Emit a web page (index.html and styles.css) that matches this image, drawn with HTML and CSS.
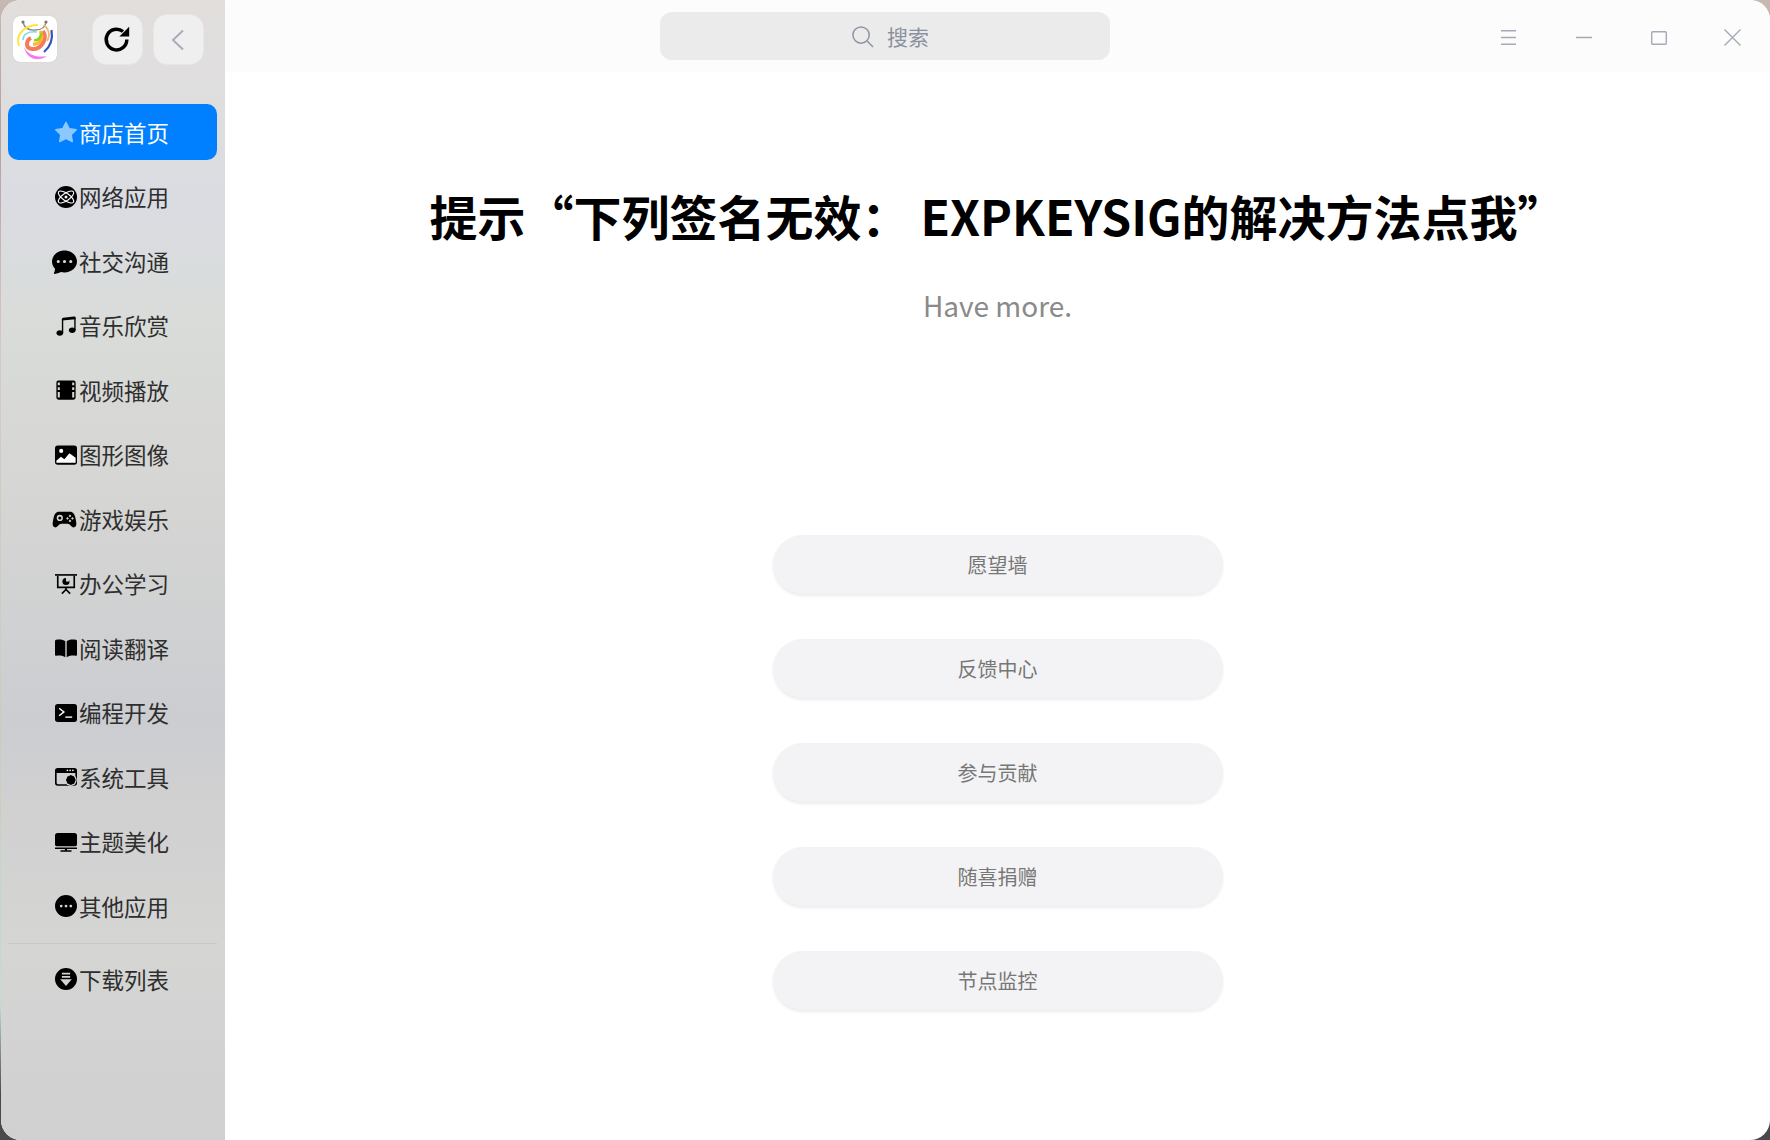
FILE: index.html
```html
<!DOCTYPE html>
<html lang="zh-CN">
<head>
<meta charset="utf-8">
<title>商店首页</title>
<link rel="stylesheet" href="styles.css">
</head>
<body>
<div class="window">
  <aside class="sidebar">
    <div class="side-top">
      <svg class="logo" viewBox="0 0 44 46">
        <rect width="44" height="46" rx="7" fill="#fff"/>
        <path d="M10 6 Q12 15 22 14 Q32 14 33 6" fill="none" stroke="#8a8a8a" stroke-width="1.400"/>
        <circle cx="10" cy="6" r="1.600" fill="#777"/><circle cx="33" cy="6" r="1.600" fill="#777"/>
        <path d="M6 30 C2 18 12 9 25 9" fill="none" stroke="#ffe23a" stroke-width="1.800"/>
        <path d="M10 24 C10 18 16 15 24 16" fill="none" stroke="#7fd8e8" stroke-width="1.600"/>
        <path d="M31 9 C37 14 37 21 34 25" fill="none" stroke="#f7b96a" stroke-width="1.800"/>
        <path d="M38.500 14 C40 23 37 31 31 36" fill="none" stroke="#2f52c8" stroke-width="2.200"/>
        <path d="M30 15 C35 23 28 34 19 33 C12 32 13 24 18 22" fill="none" stroke="#f47a5e" stroke-width="4"/>
        <path d="M27 15 C32 22 26 29 20 28" fill="none" stroke="#ffb52e" stroke-width="3"/>
        <path d="M28 17 C28 22 25 25 21 24" fill="none" stroke="#8fd01c" stroke-width="2.600"/>
        <path d="M11 31 C15 39 24 42 34 40 C25 46 14 44 11 31 Z" fill="#f47af0"/>
      </svg>
      <button class="tool-btn">
        <svg class="ico-refresh" viewBox="0 0 16 16"><path fill="none" stroke="#000" stroke-width="1.900" d="M13.700 8a5.700 5.700 0 1 1-2.100-4.400"/><path d="M9.600 6.400h5.400V1z" fill="#000"/></svg>
      </button>
      <button class="tool-btn">
        <svg class="ico-back" viewBox="0 0 14 22"><path fill="none" stroke="#a9adbb" stroke-width="2" d="M12 1.500 2 11l10 9.500"/></svg>
      </button>
    </div>
    <nav class="nav">
      <a class="nav-item active">
        <svg class="nav-ico" viewBox="0 0 16 16"><path d="M3.612 15.443c-.386.198-.824-.149-.746-.592l.83-4.730L.173 6.765c-.329-.314-.158-.888.283-.95l4.898-.696L7.538.792c.197-.39.73-.39.927 0l2.184 4.327 4.898.696c.441.062.612.636.282.95l-3.522 3.356.83 4.730c.078.443-.36.79-.746.592L8 13.187l-4.389 2.256z"/></svg>
        <span>商店首页</span>
      </a>
      <a class="nav-item">
        <svg class="nav-ico" viewBox="0 0 16 16"><circle cx="8" cy="8" r="8"/><g fill="none" stroke="#fff" stroke-width=".8"><ellipse cx="8" cy="8" rx="6.600" ry="2.600" transform="rotate(35 8 8)"/><ellipse cx="8" cy="8" rx="6.600" ry="2.600" transform="rotate(-35 8 8)"/></g><circle cx="8" cy="8" r="1.100" fill="#fff"/></svg>
        <span>网络应用</span>
      </a>
      <a class="nav-item">
        <svg class="nav-ico wide" viewBox="0 0 16 16"><path d="M16 8c0 3.866-3.582 7-8 7a9.060 9.060 0 0 1-2.347-.306c-.584.296-1.925.864-4.181 1.234-.2.032-.352-.176-.273-.362.354-.836.674-1.950.77-2.966C.744 11.370 0 9.760 0 8c0-3.866 3.582-7 8-7s8 3.134 8 7zM5 8a1 1 0 1 0-2 0 1 1 0 0 0 2 0zm4 0a1 1 0 1 0-2 0 1 1 0 0 0 2 0zm3 1a1 1 0 1 0 0-2 1 1 0 0 0 0 2z"/></svg>
        <span>社交沟通</span>
      </a>
      <a class="nav-item">
        <svg class="nav-ico" viewBox="0 0 16 16"><path d="M6 13c0 1.105-1.120 2-2.500 2S1 14.105 1 13c0-1.104 1.120-2 2.500-2s2.500.896 2.500 2zm9-2c0 1.105-1.120 2-2.500 2s-2.500-.895-2.500-2 1.120-2 2.500-2 2.500.895 2.500 2z"/><path d="M14 11V2h1v9h-1zM6 3v10H5V3h1z"/><path d="M5 2.905a1 1 0 0 1 .9-.995l8-.8a1 1 0 0 1 1.100.995V3L5 4V2.905z"/></svg>
        <span>音乐欣赏</span>
      </a>
      <a class="nav-item">
        <svg class="nav-ico" viewBox="0 0 16 16"><path fill-rule="evenodd" d="M2.500 1h11A1.500 1.500 0 0 1 15 2.500v11a1.500 1.500 0 0 1-1.500 1.500h-11A1.500 1.500 0 0 1 1 13.500v-11A1.500 1.500 0 0 1 2.500 1zM2 2.500v2h1.500v-2zm0 3.500v2h1.500V6zm0 3.500v2h1.500v-2zm0 3.200v.8h1.500v-2H2zM12.500 2.500v2H14v-2zm0 3.500v2H14V6zm0 3.500v2H14v-2zm0 3.500v.5H14v-2h-1.500z"/></svg>
        <span>视频播放</span>
      </a>
      <a class="nav-item">
        <svg class="nav-ico" viewBox="0 0 16 16"><rect y="1" width="16" height="14" rx="2"/><circle cx="4.500" cy="5" r="1.500" fill="#fff"/><path fill="#fff" d="M1 13.700v-1.500l3.300-3 2.500 1.800 3.700-4.200L15 10v3.700z"/></svg>
        <span>图形图像</span>
      </a>
      <a class="nav-item">
        <svg class="nav-ico wide" viewBox="0 0 16 16"><path fill-rule="evenodd" d="M4.500 3h7c2 0 3 1.500 3.500 4 .5 2.500 1.300 5.500-.8 6-1.700.4-2.400-2.300-4.200-2.300H6c-1.800 0-2.500 2.700-4.200 2.300C-.3 12.500.5 9.500 1 7c.5-2.500 1.500-4 3.500-4zM5 5a2 2 0 1 0 0 4 2 2 0 0 0 0-4zm0 1a1 1 0 1 1 0 2 1 1 0 0 1 0-2zm6.500-1.200-.9.900.9.900.9-.9zm-1.600 1.600-.9.900.9.900.9-.9zm3.200 0-.9.900.9.900.9-.9zM11.500 8l-.9.900.9.900.9-.9z"/></svg>
        <span>游戏娱乐</span>
      </a>
      <a class="nav-item">
        <svg class="nav-ico" viewBox="0 0 16 16"><path d="M0 .8h16V2H0z"/><path fill="none" stroke="#000" stroke-width="1.200" d="M2 2v8.500h12V2M8 10.500v2M8 12l-3 3M8 12l3 3"/><circle cx="8" cy="6.200" r="2.600"/><path fill="#d3d3d2" d="M8 6.200V3.600h2.600v2.600z"/></svg>
        <span>办公学习</span>
      </a>
      <a class="nav-item">
        <svg class="nav-ico" viewBox="0 0 16 16"><path d="M7.500 3C6 1.800 3.500 1.500.800 2 .4 2.100 0 2.400 0 2.900v10c0 .5.500.8 1 .7 2.500-.4 4.800-.1 6.500 1.100zM8.500 3c1.500-1.200 4-1.500 6.700-1 .4.100.8.400.8.900v10c0 .5-.5.800-1 .7-2.500-.4-4.800-.1-6.500 1.100z"/></svg>
        <span>阅读翻译</span>
      </a>
      <a class="nav-item">
        <svg class="nav-ico" viewBox="0 0 16 16"><rect y="1.500" width="16" height="13" rx="2"/><path fill="none" stroke="#fff" stroke-width="1" d="M3 4.500 6.500 7.200 3 10"/><path fill="none" stroke="#fff" stroke-width="1" d="M7.500 11h5"/></svg>
        <span>编程开发</span>
      </a>
      <a class="nav-item">
        <svg class="nav-ico" viewBox="0 0 16 16"><path fill="none" stroke="#000" stroke-width="1.200" d="M2 2.600h12a1.400 1.400 0 0 1 1.400 1.400v8.400a1.400 1.400 0 0 1-1.400 1.400H2a1.400 1.400 0 0 1-1.400-1.400V4A1.400 1.400 0 0 1 2 2.600z"/><path d="M2 1.500h12a2 2 0 0 1 2 2V5H0V3.500a2 2 0 0 1 2-2z"/><g fill="#fff"><circle cx="9" cy="3.200" r=".6"/><circle cx="11" cy="3.200" r=".6"/><circle cx="13" cy="3.200" r=".6"/></g><circle cx="11.500" cy="10.200" r="4.300" fill="#d2d2d2"/><circle cx="11.500" cy="10.200" r="2.300" fill="none" stroke="#000" stroke-width="1.900"/><path stroke="#000" stroke-width="1.200" d="M11.500 6.800v6.800M8.100 10.200h6.800M9.100 7.800l4.800 4.800M13.900 7.800l-4.800 4.800"/></svg>
        <span>系统工具</span>
      </a>
      <a class="nav-item">
        <svg class="nav-ico" viewBox="0 0 16 16"><path d="M2 1.500h12A2 2 0 0 1 16 3.500v6.300a1.200 1.200 0 0 1-1.200 1.200H1.200A1.200 1.200 0 0 1 0 9.800V3.500a2 2 0 0 1 2-2zM0 12h16v1.100H0zM7.200 13h1.600v1H12v1H4v-1h3.200z"/></svg>
        <span>主题美化</span>
      </a>
      <a class="nav-item">
        <svg class="nav-ico" viewBox="0 0 16 16"><path d="M16 8A8 8 0 1 1 0 8a8 8 0 0 1 16 0zM5.500 8a1 1 0 1 0-2 0 1 1 0 0 0 2 0zm3.500 0a1 1 0 1 0-2 0 1 1 0 0 0 2 0zm2.500 1a1 1 0 1 0 0-2 1 1 0 0 0 0 2z"/></svg>
        <span>其他应用</span>
      </a>
      <hr class="nav-sep">
      <a class="nav-item last">
        <svg class="nav-ico" viewBox="0 0 16 16"><path fill-rule="evenodd" d="M16 8A8 8 0 1 1 0 8a8 8 0 0 1 16 0zM5 3.500h6v1.200H5zM5 5.800h6V7H5zM5 8.200H3.800L8 13l4.200-4.800H5z"/></svg>
        <span>下载列表</span>
      </a>
    </nav>
  </aside>
  <main class="main">
    <header class="titlebar">
      <div class="search">
        <svg class="search-ico" viewBox="0 0 24 24"><circle cx="10.500" cy="10.500" r="8.500" fill="none" stroke="#8f95a6" stroke-width="1.600"/><path d="m16.500 16.500 6.500 6.500" fill="none" stroke="#8f95a6" stroke-width="1.600"/></svg>
        <span>搜索</span>
      </div>
      <div class="win-ctrls">
        <svg class="ctrl c-menu" viewBox="0 0 15 15"><path fill="none" stroke="#a5a9b8" stroke-width="1.500" d="M0 .8h15M0 7.500h15M0 14.300h15"/></svg>
        <svg class="ctrl c-min" viewBox="0 0 16 3"><path fill="none" stroke="#a5a9b8" stroke-width="1.500" d="M0 1.500h16"/></svg>
        <svg class="ctrl c-max" viewBox="0 0 16 14"><rect x=".7" y=".7" width="14.600" height="12.600" rx="1" fill="none" stroke="#a5a9b8" stroke-width="1.400"/></svg>
        <svg class="ctrl c-close" viewBox="0 0 17 17"><path fill="none" stroke="#a5a9b8" stroke-width="1.400" d="M.5.500l16 16M16.500.500l-16 16"/></svg>
      </div>
    </header>
    <section class="content">
      <h1 class="headline">提示“下列签名无效： EXPKEYSIG的解决方法点我”</h1>
      <p class="tagline">Have more.</p>
      <div class="links">
        <button class="pill">愿望墙</button>
        <button class="pill">反馈中心</button>
        <button class="pill">参与贡献</button>
        <button class="pill">随喜捐赠</button>
        <button class="pill">节点监控</button>
      </div>
    </section>
  </main>
</div>
</body>
</html>
```

FILE: styles.css
```css
* { box-sizing: border-box; }
html, body { height: 100%; }
body {
  margin: 0;
  overflow: hidden;
  font-family: "Noto Sans CJK SC", "Noto Sans", sans-serif;
  background:
    linear-gradient(180deg, #c8b8b2 0, #b39f9b 12%, #d8c8c4 30%, #c5d0bd 70%, #bfe0cf 88%, #4c4846 96%, #4a4a4a 100%);
}
.window {
  height: 1140px;
  margin-left: 1px;
  display: flex;
  border-radius: 20px;
  overflow: hidden;
  background: #fff;
}
.sidebar {
  width: 224px;
  flex: none;
  display: flex;
  flex-direction: column;
  background:
    linear-gradient(180deg, #e1dedc 0, #dfdedf 100px, #dadce2 200px, #d9dcd9 320px, #d6d6d4 480px, #d0d1d2 620px, #cccdd1 720px, #d1d1d1 820px, #d5d5d4 950px, #d0d0d1 1140px);
}
.side-top {
  height: 104px;
  padding: 14px 0 0 12px;
  display: flex;
  align-items: flex-start;
}
.logo { width: 44px; height: 46px; margin-top: 2px; box-shadow: 0 0 1px #bbb; border-radius: 7px; }
.tool-btn {
  width: 51px;
  height: 51px;
  padding: 0;
  margin-left: 10px;
  display: flex;
  align-items: center;
  justify-content: center;
  background: #efefef;
  border: 1px solid #e6e6e6;
  border-radius: 14px;
}
.logo + .tool-btn { margin-left: 35px; }
.ico-refresh { width: 29px; height: 29px; margin-right: 2px; }
.ico-back { width: 14px; height: 22px; margin-right: 2px; }
.nav { display: flex; flex-direction: column; padding: 0 8px 0 7px; }
.nav-item {
  height: 56px;
  margin-bottom: 8.500px;
  padding-right: 1px;
  border-radius: 10px;
  display: flex;
  align-items: center;
  justify-content: center;
  gap: 2px;
  font-size: 22.500px;
  line-height: 1;
  color: #2e2e2e;
}
.nav-item.active { background: #0080ff; color: #fff; }
.nav-item.last { margin-top: 7.500px; }
.nav-ico { width: 22px; height: 22px; flex: none; fill: #000; }
.nav-ico.wide { width: 25px; height: 25px; margin-left: -3px; }
.active .nav-ico { fill: #8cc8ff; }
.nav-sep {
  width: 100%;
  height: 1px;
  border: 0;
  margin: 0;
  background: #c9c9c9;
}
.main { flex: 1; display: flex; flex-direction: column; min-width: 0; }
.titlebar {
  height: 72px;
  flex: none;
  display: flex;
  align-items: flex-start;
  background: #fcfcfc;
  padding-top: 12px;
}
.search {
  width: 450px;
  height: 48px;
  margin-left: 435px;
  padding-left: 10px;
  display: flex;
  align-items: center;
  justify-content: center;
  gap: 13px;
  border-radius: 12px;
  background: #ebebeb;
  color: #8a90a0;
  font-size: 21px;
}
.search-ico { width: 23px; height: 23px; }
.win-ctrls {
  margin-left: auto;
  height: 17px;
  margin-top: 17px;
  padding-right: 29px;
  display: flex;
  align-items: center;
  gap: 59px;
}
.c-menu { width: 15px; height: 15px; margin-right: 1px; }
.c-min { width: 16px; height: 3px; }
.c-max { width: 16px; height: 14px; }
.c-close { width: 17px; height: 17px; margin-left: -2px; }
.content {
  flex: 1;
  display: flex;
  flex-direction: column;
  align-items: center;
}
.headline {
  margin: 109px 0 0;
  font-size: 48px;
  font-weight: 700;
  line-height: 68px;
  color: #000;
  white-space: nowrap;
}
.tagline {
  margin: 36px 0 0;
  font-size: 28px;
  line-height: 40px;
  color: #8a8a8a;
}
.links {
  margin-top: 210px;
  display: flex;
  flex-direction: column;
  gap: 45px;
}
.pill {
  width: 450px;
  height: 59px;
  padding: 0;
  border: 0;
  border-radius: 30px;
  background: #f3f3f5;
  box-shadow: 0 2px 3px rgba(0, 0, 0, .08);
  font-family: inherit;
  font-size: 20px;
  color: #777;
}
```
